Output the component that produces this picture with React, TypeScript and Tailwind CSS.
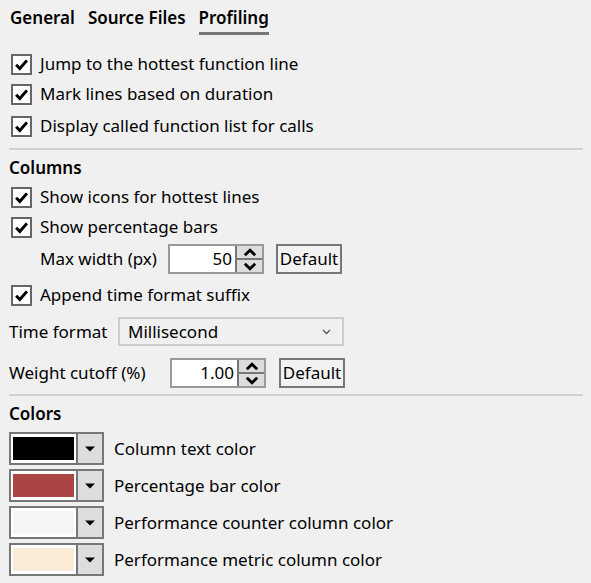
import { ReactNode } from 'react';

const FONT = { fontFamily: '"Noto Sans", "Open Sans", sans-serif' };

function CheckBox() {
  return (
    <span className="w-[21px] h-[21px] border-2 border-[#666] bg-white flex items-center justify-center shrink-0">
      <svg width="15" height="15" viewBox="0 0 16 16">
        <path d="M2.3 8.3 L6.2 12.3 L13.8 3.6" fill="none" stroke="#000" strokeWidth="3.2" />
      </svg>
    </span>
  );
}

function CheckRow({ label, className = '' }: { label: string; className?: string }) {
  return (
    <div className={`flex items-center gap-[8px] pl-[11px] h-[30px] ${className}`}>
      <CheckBox />
      <span>{label}</span>
    </div>
  );
}

function Spinner({ value }: { value: string }) {
  return (
    <div className="flex h-[30px] w-[96px] border-2 border-[#999] bg-white">
      <span className="flex-1 text-right pr-[3px] leading-[26px]">{value}</span>
      <div className="w-[27px] flex flex-col border-l-2 border-[#777] bg-[#ddd]">
        <span className="flex-1 flex items-center justify-center border-b-2 border-[#777]">
          <svg width="14" height="9" viewBox="0 0 14 9">
            <path d="M1.8 7.3 L7 2.2 L12.2 7.3" fill="none" stroke="#000" strokeWidth="2.8" />
          </svg>
        </span>
        <span className="flex-1 flex items-center justify-center">
          <svg width="14" height="9" viewBox="0 0 14 9">
            <path d="M1.8 1.7 L7 6.8 L12.2 1.7" fill="none" stroke="#000" strokeWidth="2.8" />
          </svg>
        </span>
      </div>
    </div>
  );
}

function DefaultButton() {
  return (
    <span className="h-[30px] w-[66px] flex items-center justify-center border-2 border-[#777] bg-[#f2f2f2]">
      Default
    </span>
  );
}

function Heading({ children, className = '' }: { children: ReactNode; className?: string }) {
  return <div className={`pl-[9px] h-[24px] flex items-center font-semibold ${className}`}>{children}</div>;
}

function Separator({ className = '' }: { className?: string }) {
  return <div className={`ml-[9px] mr-[8px] h-[2px] bg-[#d0d0d0] ${className}`} />;
}

function ColorRow({ color, label }: { color: string; label: string }) {
  return (
    <div className="flex items-center gap-[10px] pl-[9px]">
      <div className="flex h-[33px] w-[95px] border-2 border-[#777]">
        <div className="flex-1 bg-white px-[2px] py-[3px]">
          <div className="w-full h-full" style={{ background: color }} />
        </div>
        <div className="w-[26px] border-l-2 border-[#777] bg-[#ddd] flex items-center justify-center">
          <svg width="12" height="8" viewBox="0 0 12 8">
            <path d="M1 1.5 H11 L6 6.5 Z" fill="#000" />
          </svg>
        </div>
      </div>
      <span>{label}</span>
    </div>
  );
}

export default function App() {
  return (
    <div className="w-[591px] h-[583px] bg-[#f0f0f0] text-black text-[17px] overflow-hidden" style={FONT}>
      <div className="h-[38px] flex items-start gap-[13px] pl-[10px] pt-[6px] font-semibold">
        <span className="leading-[24px]">General</span>
        <span className="leading-[24px]">Source Files</span>
        <span className="leading-[24px] border-b-[3px] border-[#777] pb-[2px]">Profiling</span>
      </div>

      <div className="flex flex-col mt-[11px]">
        <CheckRow label="Jump to the hottest function line" />
        <CheckRow label="Mark lines based on duration" />
        <CheckRow label="Display called function list for calls" className="mt-[2px]" />
      </div>

      <Separator className="mt-[7px]" />

      <Heading className="mt-[6px]">Columns</Heading>
      <div className="flex flex-col mt-[2px]">
        <CheckRow label="Show icons for hottest lines" />
        <CheckRow label="Show percentage bars" />
      </div>
      <div className="flex items-center pl-[40px] mt-[2px] h-[30px]">
        <span className="w-[128px]">Max width (px)</span>
        <Spinner value="50" />
        <span className="ml-[12px]"><DefaultButton /></span>
      </div>
      <CheckRow label="Append time format suffix" className="mt-[6px]" />
      <div className="flex items-center pl-[9px] mt-[7px] h-[29px]">
        <span className="w-[109px]">Time format</span>
        <div className="w-[226px] h-[29px] border-2 border-[#ccc] bg-[#f0f0f0] flex items-center justify-between pl-[8px] pr-[11px]">
          <span>Millisecond</span>
          <svg width="9" height="6" viewBox="0 0 9 6">
            <path d="M1 1 L4.5 4.5 L8 1" fill="none" stroke="#555" strokeWidth="1.3" />
          </svg>
        </div>
      </div>
      <div className="flex items-center pl-[9px] mt-[12px] h-[30px]">
        <span className="w-[161px]">Weight cutoff (%)</span>
        <Spinner value="1.00" />
        <span className="ml-[13px]"><DefaultButton /></span>
      </div>

      <Separator className="mt-[6px]" />

      <Heading className="mt-[6px]">Colors</Heading>
      <div className="flex flex-col gap-[4px] mt-[6px]">
        <ColorRow color="#000000" label="Column text color" />
        <ColorRow color="#ac4444" label="Percentage bar color" />
        <ColorRow color="#f5f5f5" label="Performance counter column color" />
        <ColorRow color="#faebd7" label="Performance metric column color" />
      </div>
    </div>
  );
}
